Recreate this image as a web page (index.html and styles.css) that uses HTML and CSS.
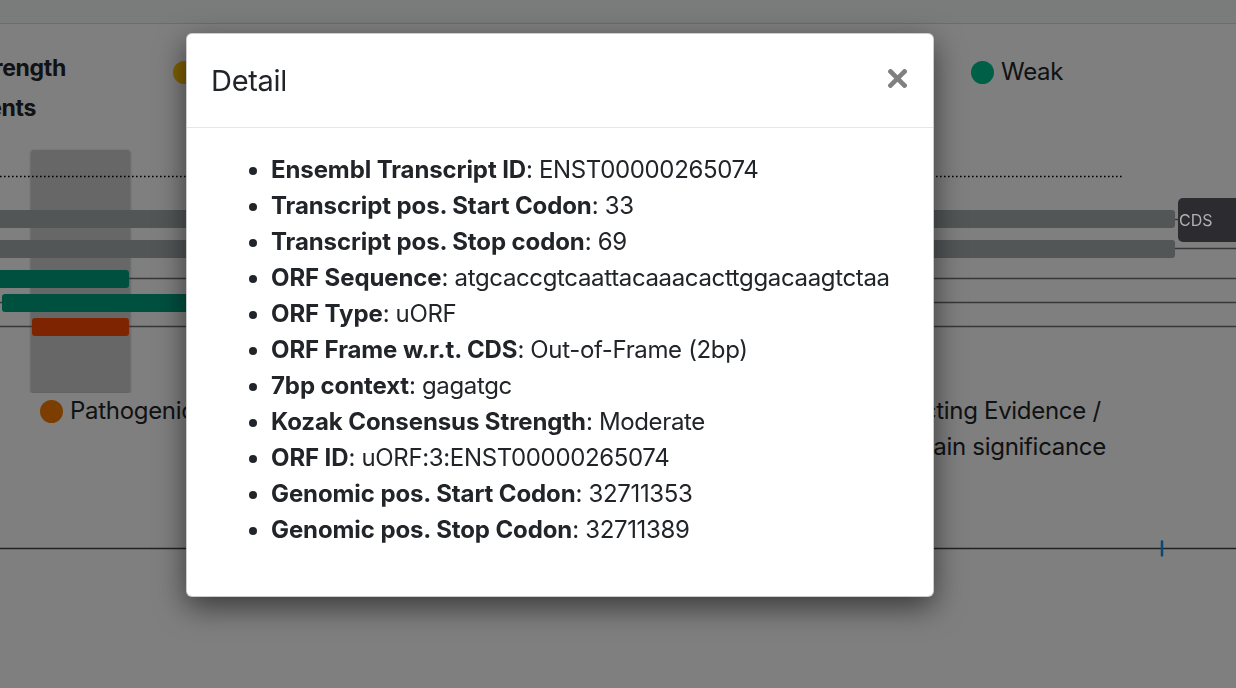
FILE: index.html
```html
<!DOCTYPE html>
<html lang="en">
<head>
<meta charset="utf-8">
<title>uORF detail</title>
<link rel="stylesheet" href="styles.css">
</head>
<body>
<div class="page">
  <div class="topbar"></div>

  <div class="kozak">
    <div class="labels">
      <div class="label">Kozak Strength</div>
      <div class="label">Experiments</div>
    </div>
    <div class="legend legend-kozak">
      <div class="item"><span class="dot dot-strong"></span>Strong</div>
      <div class="item"><span class="dot dot-moderate"></span>Moderate</div>
      <div class="item"><span class="dot dot-weak"></span>Weak</div>
    </div>
  </div>

  <svg class="tracks" width="1236" height="253" viewBox="0 140 1236 253" aria-hidden="true">
    <rect class="highlight" x="31" y="150" width="99" height="242.5" rx="3"/>
    <line class="dotted" x1="0" y1="176.5" x2="1123" y2="176.5"/>
    <rect class="bar-gray" x="-5" y="210" width="1180" height="18" rx="3"/>
    <rect class="bar-gray" x="-5" y="240" width="1180" height="18" rx="3"/>
    <line class="track-line" x1="1175" y1="219.5" x2="1178" y2="219.5"/>
    <line class="track-line" x1="1175" y1="248.5" x2="1236" y2="248.5"/>
    <line class="track-line" x1="0" y1="278.5" x2="1236" y2="278.5"/>
    <line class="track-line" x1="0" y1="302.5" x2="1236" y2="302.5"/>
    <line class="track-line" x1="0" y1="326.5" x2="1236" y2="326.5"/>
    <rect class="bar-green" x="-5" y="270" width="134" height="18" rx="3"/>
    <rect class="bar-green" x="2" y="294" width="520" height="18" rx="3"/>
    <rect class="bar-orange" x="32" y="318" width="97" height="18" rx="3"/>
  </svg>

  <div class="legend legend-clin">
    <div class="item"><span class="dot dot-path"></span>Pathogenic</div>
    <div class="item"><span class="dot dot-benign"></span>Benign</div>
    <div class="item item-wrap"><span class="dot dot-conf"></span><span>Conflicting Evidence / Uncertain significance</span></div>
  </div>

  <svg class="axis" width="1236" height="105" viewBox="0 465 1236 105" aria-hidden="true">
    <line class="axis-line" x1="0" y1="548.5" x2="1236" y2="548.5"/>
    <line class="axis-tick" x1="1162" y1="541.5" x2="1162" y2="555.5"/>
  </svg>
</div>

<div class="backdrop"></div>
<div class="tooltip">CDS</div>

<div class="modal" role="dialog" aria-labelledby="modal-title">
  <div class="modal-header">
    <h5 class="modal-title" id="modal-title">Detail</h5>
    <button class="close" type="button" aria-label="Close">
      <svg width="19" height="19" viewBox="0 0 19 19"><path d="M2.5 2.5 L16.5 16.5 M16.5 2.5 L2.5 16.5"/></svg>
    </button>
  </div>
  <div class="modal-body">
    <ul class="details">
      <li><b>Ensembl Transcript ID</b>: ENST00000265074</li>
      <li><b>Transcript pos. Start Codon</b>: 33</li>
      <li><b>Transcript pos. Stop codon</b>: 69</li>
      <li><b>ORF Sequence</b>: atgcaccgtcaattacaaacacttggacaagtctaa</li>
      <li><b>ORF Type</b>: uORF</li>
      <li><b>ORF Frame w.r.t. CDS</b>: Out-of-Frame (2bp)</li>
      <li><b>7bp context</b>: gagatgc</li>
      <li><b>Kozak Consensus Strength</b>: Moderate</li>
      <li><b>ORF ID</b>: uORF:3:ENST00000265074</li>
      <li><b>Genomic pos. Start Codon</b>: 32711353</li>
      <li><b>Genomic pos. Stop Codon</b>: 32711389</li>
    </ul>
  </div>
</div>
</body>
</html>
```

FILE: styles.css
```css
* { box-sizing: border-box; }

html, body {
  margin: 0;
  width: 1236px;
  height: 688px;
  overflow: hidden;
  background: #ffffff;
  font-family: Inter, "Noto Sans", "Liberation Sans", sans-serif;
  color: #212529;
}

.page {
  width: 1236px;
}

.topbar {
  height: 24px;
  background: #f4f6f6;
  border-bottom: 1px solid #d8d8d8;
}

/* Kozak strength row */
.kozak {
  display: flex;
  height: 116px;
}

.labels {
  width: 275px;
  margin-left: -102px;
  padding-top: 24px;
  flex: none;
}

.label {
  font-size: 23px;
  line-height: 40px;
  font-weight: 700;
  letter-spacing: -0.3px;
  white-space: nowrap;
}

.legend {
  display: grid;
  font-size: 24px;
  line-height: 36px;
  letter-spacing: -0.3px;
}

.legend-kozak {
  grid-template-columns: 399px 399px auto;
  padding-top: 30px;
  align-content: start;
}

.item {
  display: flex;
  align-items: flex-start;
  white-space: nowrap;
}

.item-wrap {
  white-space: normal;
}

.dot {
  flex: none;
  width: 23px;
  height: 23px;
  border-radius: 50%;
  margin: 6.5px 7px 0 0;
}

.dot-strong { background: #ffc107; }
.dot-moderate { background: #fd9a2a; }
.dot-weak { background: #00bf8f; }
.dot-path { background: #f97a00; }
.dot-benign { background: #2e8bd8; }
.dot-conf { background: #9aa0a6; }

/* tracks */
.tracks, .axis {
  display: block;
}

.highlight {
  fill: #cfcfcf;
  filter: drop-shadow(0 1px 1.5px rgba(0, 0, 0, 0.35));
}

.dotted {
  stroke: #000;
  stroke-width: 1.6;
  stroke-dasharray: 1.6 2.4;
}

.bar-gray { fill: #a4acac; }
.bar-green { fill: #00a080; }
.bar-orange { fill: #ff4800; }

.track-line {
  stroke: #6e6e6e;
  stroke-width: 1.4;
}

.legend-clin {
  grid-template-columns: 387px 387px 300px;
  padding-left: 40px;
  height: 72px;
}

.legend-clin .item-wrap {
  padding-left: 14px;
}

.axis-line {
  stroke: #444;
  stroke-width: 1.6;
}

.axis-tick {
  stroke: #1494e0;
  stroke-width: 2.5;
  stroke-linecap: round;
}

/* overlay */
.backdrop {
  position: fixed;
  inset: 0;
  background: rgba(0, 0, 0, 0.5);
  z-index: 10;
}

.tooltip {
  position: absolute;
  left: 1178px;
  top: 198px;
  width: 80px;
  height: 44px;
  padding-left: 1px;
  background: #2c2c30;
  color: #b0b0b0;
  border-radius: 5px;
  font-size: 16px;
  line-height: 44px;
  z-index: 30;
}

/* modal */
.modal {
  position: absolute;
  left: 186px;
  top: 33px;
  width: 748px;
  background: #fff;
  border: 1px solid rgba(0, 0, 0, 0.2);
  border-radius: 6px;
  box-shadow: 0 10px 30px rgba(0, 0, 0, 0.55);
  z-index: 20;
}

.modal-header {
  display: flex;
  align-items: center;
  justify-content: space-between;
  padding: 24px;
  border-bottom: 1px solid #e6e6e6;
}

.modal-title {
  margin: 0;
  font-size: 29px;
  line-height: 45px;
  font-weight: 400;
  letter-spacing: -0.3px;
}

.close {
  display: block;
  padding: 0;
  margin: -4px 2px 0 0;
  border: 0;
  background: transparent;
  width: 19px;
  height: 19px;
  cursor: pointer;
}

.close svg {
  display: block;
}

.close path {
  stroke: #808080;
  stroke-width: 4.6;
  stroke-linecap: square;
  fill: none;
}

.modal-body {
  padding: 24px;
}

.details {
  margin: 0 0 24px;
  padding-left: 60px;
  font-size: 24px;
  line-height: 36px;
  letter-spacing: -0.35px;
}

.details b {
  font-weight: 700;
  letter-spacing: -0.1px;
}
```
